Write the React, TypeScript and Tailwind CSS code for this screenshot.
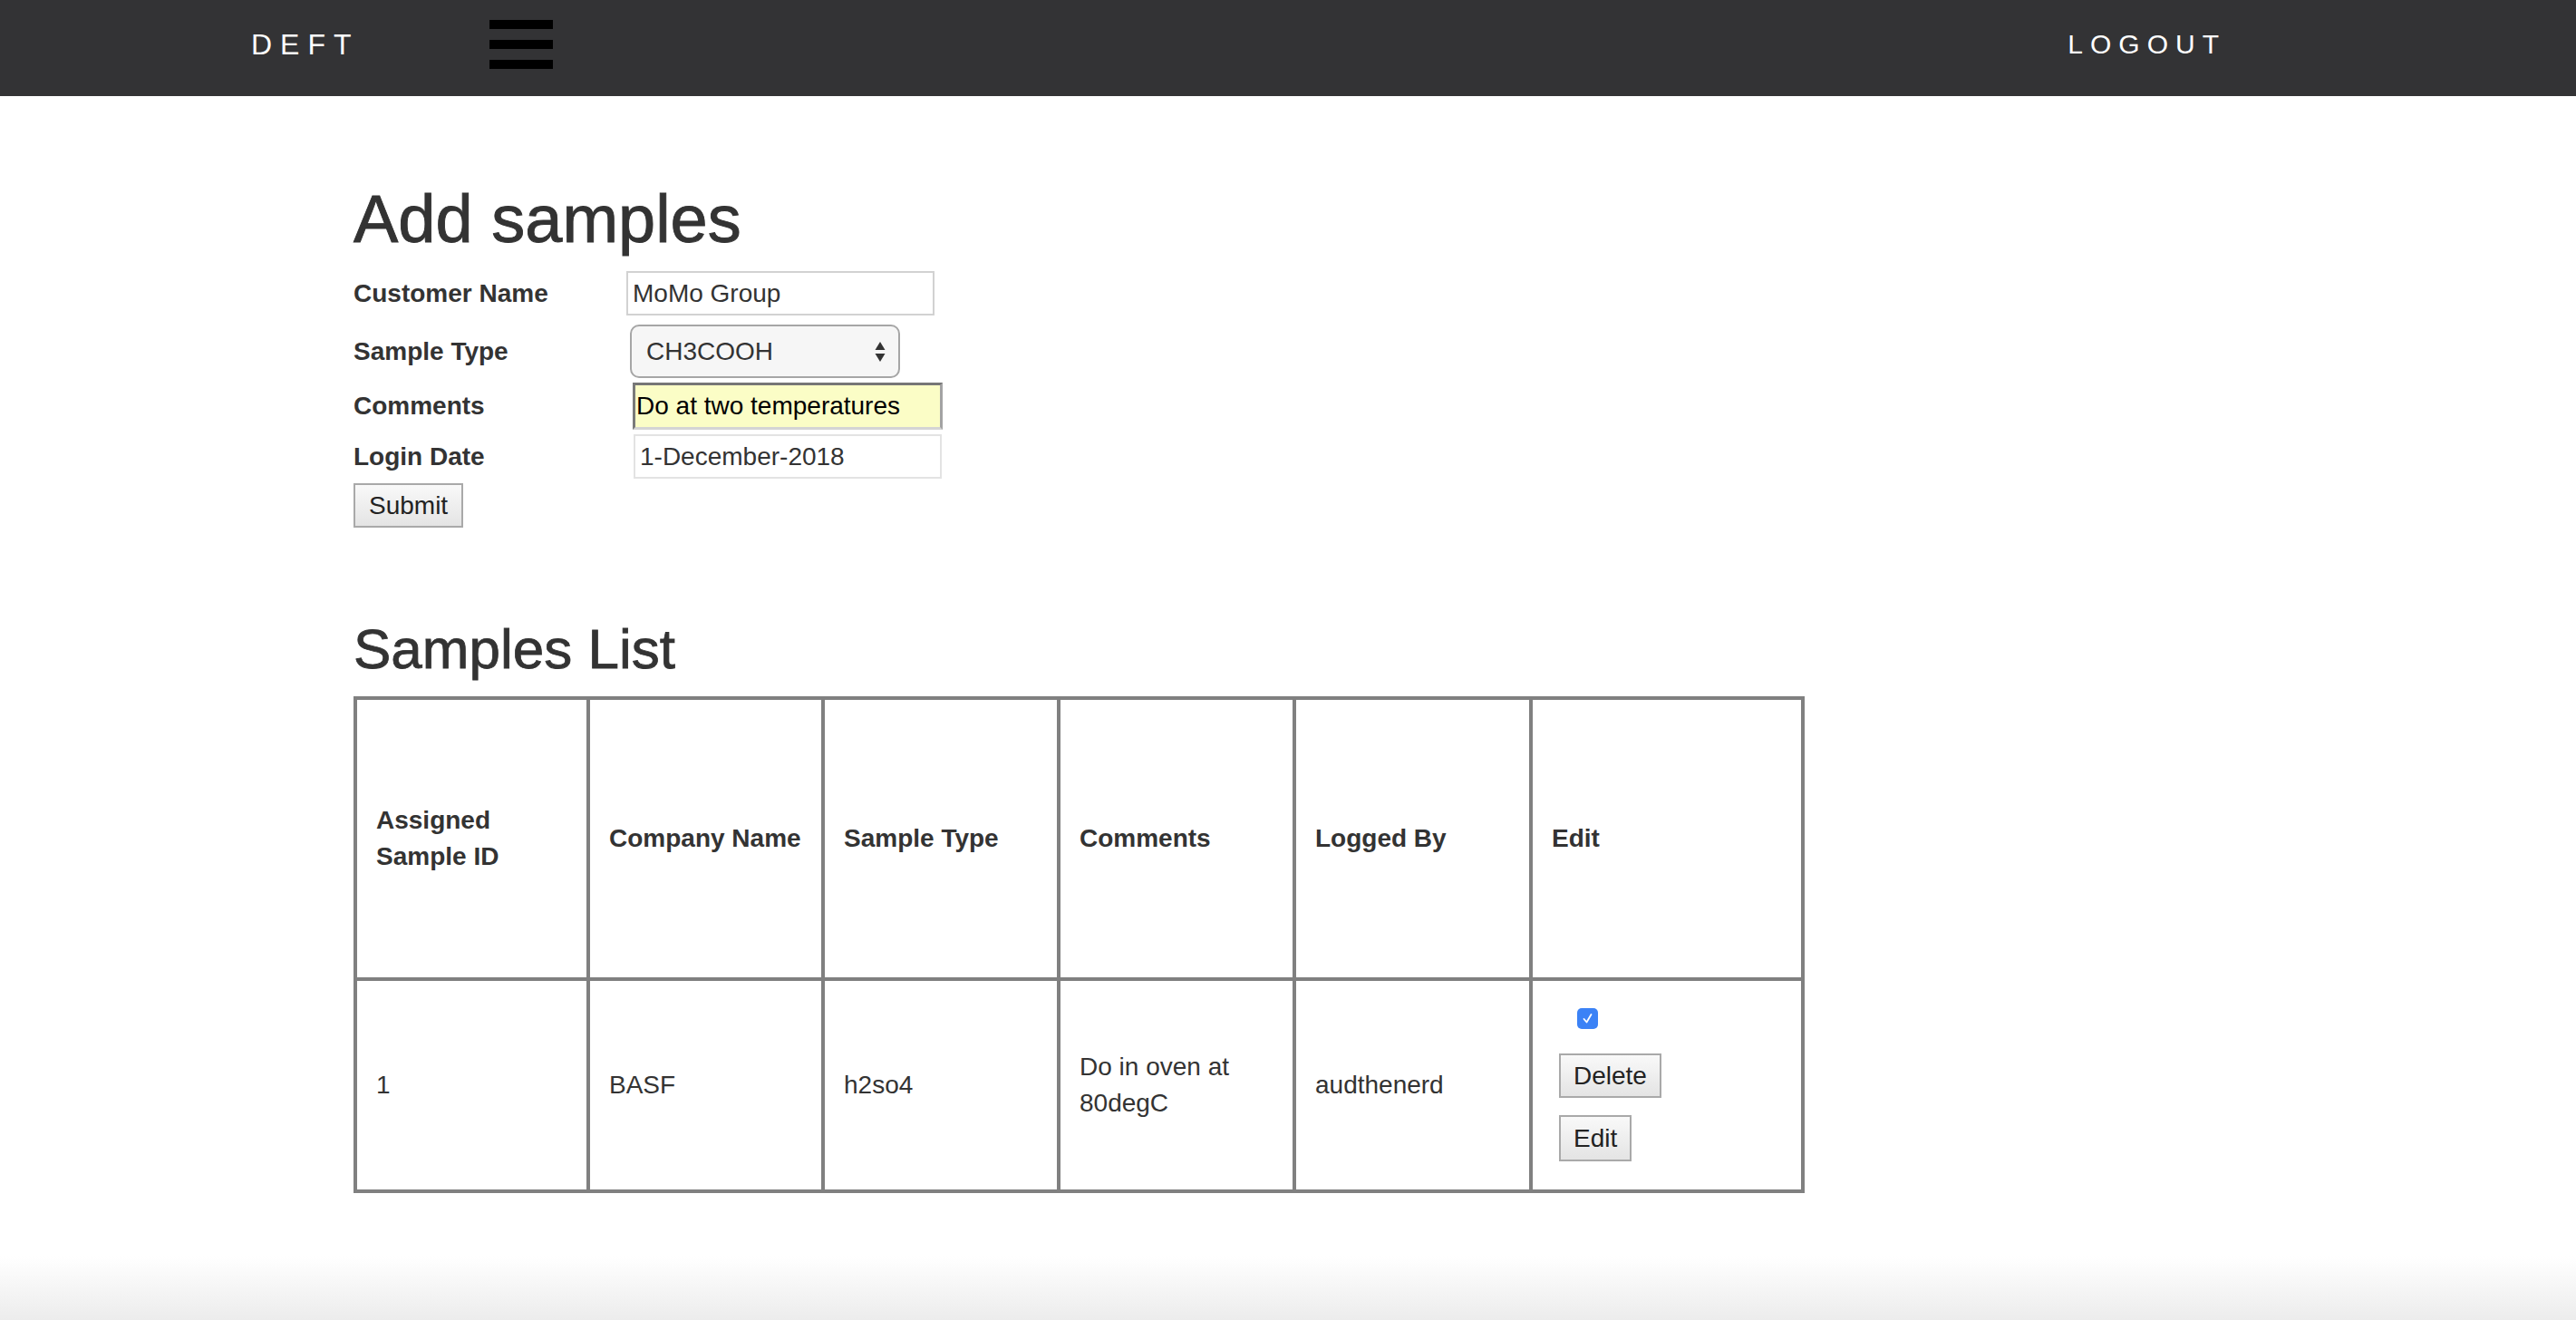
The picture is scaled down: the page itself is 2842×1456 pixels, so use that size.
import React from "react";

const cols = [
  { w: "w-[257px]", head: "Assigned Sample ID", body: "1" },
  { w: "w-[259px]", head: "Company Name", body: "BASF" },
  { w: "w-[260px]", head: "Sample Type", body: "h2so4" },
  { w: "w-[260px]", head: "Comments", body: "Do in oven at 80degC" },
  { w: "w-[261px]", head: "Logged By", body: "audthenerd" },
];

function Hamburger() {
  return (
    <div className="flex w-[70px] flex-col gap-[12px]">
      <span className="h-[10px] w-full bg-black" />
      <span className="h-[10px] w-full bg-black" />
      <span className="h-[10px] w-full bg-black" />
    </div>
  );
}

function SelectArrows() {
  return (
    <svg width="12" height="24" viewBox="0 0 12 24" className="shrink-0">
      <path d="M6 1 L11.5 10 L0.5 10 Z" fill="#333" />
      <path d="M6 23 L11.5 14 L0.5 14 Z" fill="#333" />
    </svg>
  );
}

function GrayButton({ label, className }: { label: string; className?: string }) {
  return (
    <button
      type="button"
      className={`flex h-[49px] items-center border-2 border-[#a9a9a9] bg-linear-to-b from-[#f9f9f9] to-[#e4e4e4] px-[14px] text-[28px] leading-none text-[#222] ${className ?? ""}`}
    >
      {label}
    </button>
  );
}

function FormRow({ label, children, className }: { label: string; children: React.ReactNode; className?: string }) {
  return (
    <div className={`flex items-center ${className ?? ""}`}>
      <label className="w-[300px] text-[28px] font-bold leading-[40px]">{label}</label>
      {children}
    </div>
  );
}

export default function App() {
  return (
    <div className="flex h-[1456px] flex-col overflow-hidden bg-white font-['Liberation_Sans',Arial,sans-serif] text-[#333]">
      <header className="flex h-[106px] shrink-0 items-center bg-[#333335] pb-[8px]">
        <div className="ml-[277px] w-[263px] text-[32px] leading-none tracking-[9px] text-white">DEFT</div>
        <Hamburger />
        <a className="ml-auto mr-[386px] text-[30px] leading-none tracking-[8px] text-white">LOGOUT</a>
      </header>

      <main className="shrink-0 pl-[390px]">
        <h1 className="mt-[95px] text-[74px] font-medium leading-[1.1] [-webkit-text-stroke:0.9px_#333]">Add samples</h1>

        <form className="flex flex-col">
          <FormRow label="Customer Name" className="mt-[17px]">
            <div className="ml-[1px] flex h-[49px] w-[340px] items-center border-2 border-[#d2d2d2] pl-[5px] text-[28px]">
              MoMo Group
            </div>
          </FormRow>
          <FormRow label="Sample Type" className="mt-[10px]">
            <div className="ml-[5px] flex h-[59px] w-[298px] items-center justify-between rounded-[10px] border-2 border-[#a6a6a6] bg-[#f6f6f6] pl-[16px] pr-[14px] text-[28px]">
              <span>CH3COOH</span>
              <SelectArrows />
            </div>
          </FormRow>
          <FormRow label="Comments" className="mt-[5px]">
            <div className="ml-[8px] flex h-[52px] w-[342px] items-center border-[3px] border-t-[#767676] border-l-[#7a7a7a] border-r-[#a3a3a3] border-b-[#d4d4d4] bg-[#fbfdc6] pl-[1px] text-[28px] text-black">
              Do at two temperatures
            </div>
          </FormRow>
          <FormRow label="Login Date" className="mt-[5px]">
            <div className="ml-[9px] flex h-[49px] w-[340px] items-center border-2 border-[#e3e3e3] pl-[5px] text-[28px]">
              1-December-2018
            </div>
          </FormRow>
          <div className="mt-[5px] flex">
            <GrayButton label="Submit" className="px-[15px]" />
          </div>
        </form>

        <h2 className="mt-[100px] text-[62px] font-medium leading-[1.1] [-webkit-text-stroke:0.8px_#333]">Samples List</h2>

        <div className="mt-[17px] flex w-fit flex-col border-b-4 border-r-4 border-[#808080]">
          <div className="flex h-[310px]">
            {cols.map((c) => (
              <div key={c.head} className={`${c.w} flex items-center border-l-4 border-t-4 border-[#808080] pl-[21px] pr-[16px] text-[28px] font-bold leading-[40px]`}>
                <span>{c.head}</span>
              </div>
            ))}
            <div className="flex w-[300px] items-center border-l-4 border-t-4 border-[#808080] pl-[21px] text-[28px] font-bold leading-[40px]">
              Edit
            </div>
          </div>
          <div className="flex h-[234px]">
            {cols.map((c) => (
              <div key={c.head} className={`${c.w} flex items-center border-l-4 border-t-4 border-[#808080] pl-[21px] pr-[16px] text-[28px] leading-[40px]`}>
                <span>{c.body}</span>
              </div>
            ))}
            <div className="flex w-[300px] flex-col justify-center border-l-4 border-t-4 border-[#808080] pl-[21px]">
              <div className="ml-[28px] flex h-[23px] w-[23px] items-center justify-center rounded-[5px] bg-[#3b82f6]">
                <svg width="13" height="13" viewBox="0 0 13 13">
                  <path d="M2.5 7 L5.5 10.5 L10.5 2" fill="none" stroke="white" strokeWidth="1.8" strokeLinecap="round" strokeLinejoin="round" />
                </svg>
              </div>
              <div className="mt-[27px] flex">
                <GrayButton label="Delete" className="ml-[8px]" />
              </div>
              <div className="mt-[19px] flex">
                <GrayButton label="Edit" className="ml-[8px] h-[51px]" />
              </div>
            </div>
          </div>
        </div>
      </main>

      <div className="flex-1 bg-linear-to-b from-white from-50% to-[#ececec]" />
    </div>
  );
}
